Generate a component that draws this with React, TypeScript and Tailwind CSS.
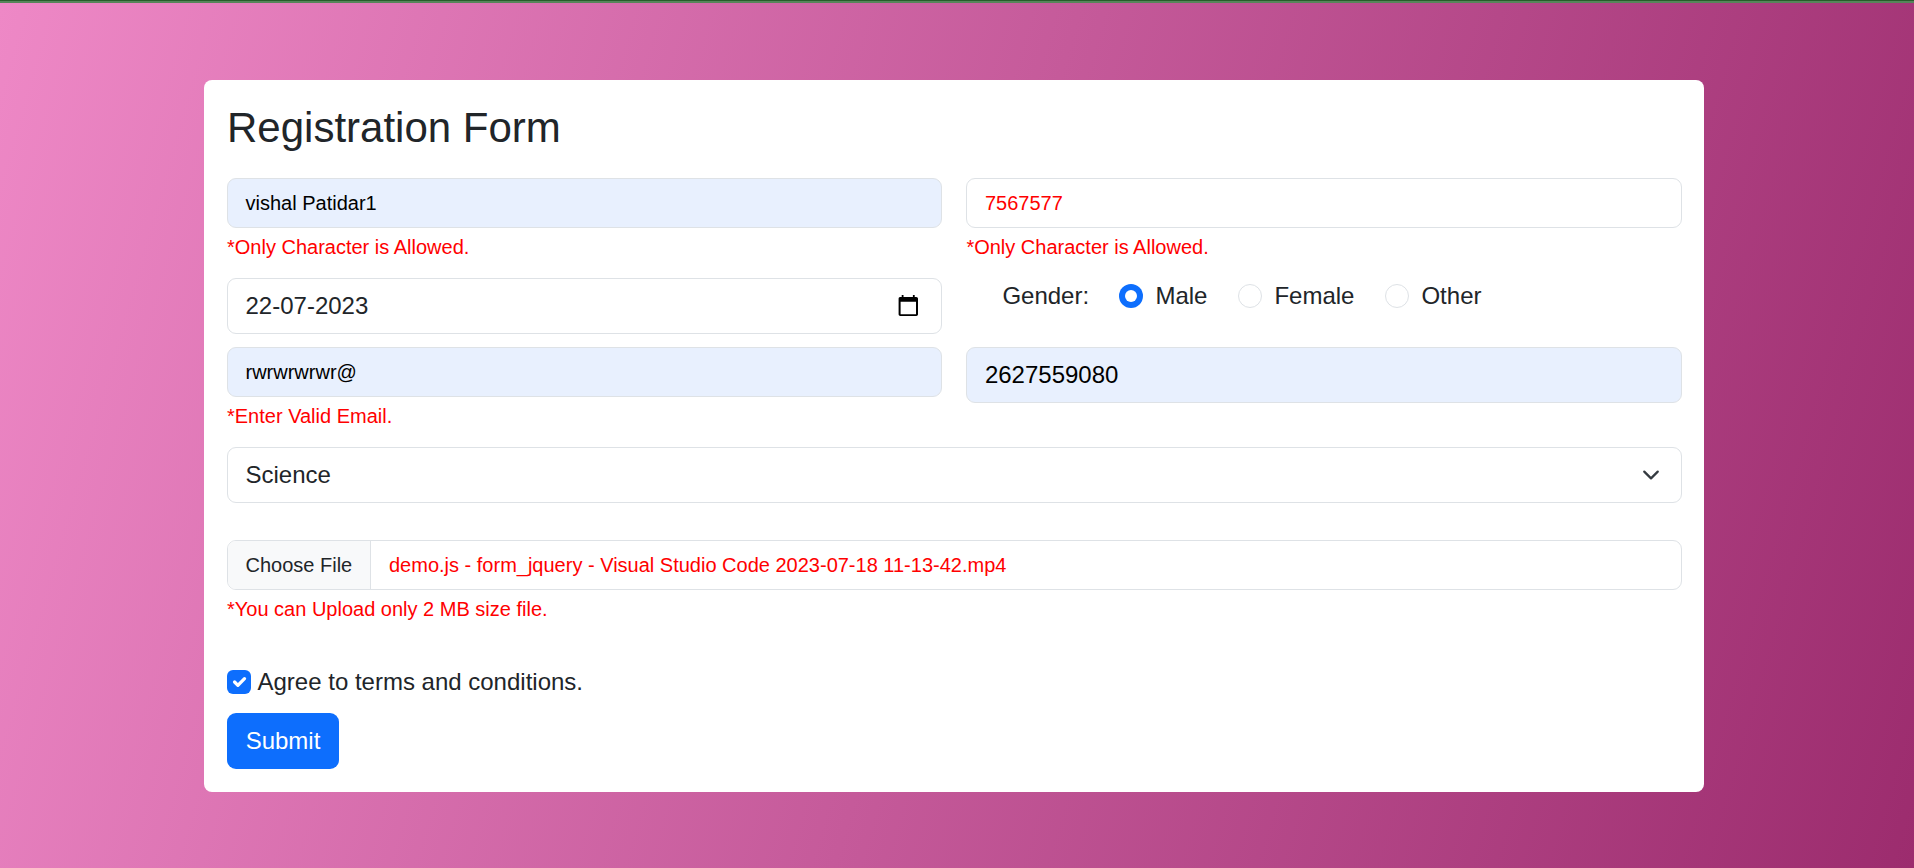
import React from "react";

type FieldProps = {
  children: React.ReactNode;
  small?: boolean;
  tint?: boolean;
  invalid?: boolean;
};

function Field({ children, small, tint, invalid }: FieldProps) {
  return (
    <div
      className={`flex items-center justify-between rounded-[9px] border border-[#dee2e6] px-[17.5px] ${
        small ? "h-[50px] text-[20px] leading-[30px]" : "h-14 text-2xl leading-9"
      } ${tint ? "bg-[#e8f0fe] text-black" : "bg-white"} ${invalid ? "text-[#ff0000]" : ""}`}
    >
      {children}
    </div>
  );
}

function ErrorText({ children }: { children: React.ReactNode }) {
  return <p className="pt-1 text-[20px] leading-[30px] text-[#ff0000]">{children}</p>;
}

function Radio({ label, checked }: { label: string; checked?: boolean }) {
  return (
    <label className="flex h-9 items-center gap-3">
      {checked ? (
        <span className="flex size-6 items-center justify-center rounded-full bg-[#0d6efd]">
          <span className="size-3 rounded-full bg-white" />
        </span>
      ) : (
        <span className="size-6 rounded-full border border-[#dee2e6] bg-white" />
      )}
      <span>{label}</span>
    </label>
  );
}

export default function App() {
  return (
    <div className="flex h-[868px] w-full flex-col font-['Liberation_Sans',Arial,sans-serif] text-2xl leading-9 text-[#212529]">
      <div className="h-[3px] shrink-0 border-t border-[#275c2a] bg-[#56855a]" />
      <main className="flex-1 bg-[linear-gradient(106deg,#ee88c6_0%,#9c2c6e_100%)] pt-[77px] pl-[204px]">
        <form className="flex h-[712px] w-[1500px] flex-col rounded-lg bg-white pt-[23px] pr-[22px] pl-[23px]">
          <h1 className="mb-[25px] h-[50px] text-[42px] leading-[50px]">Registration Form</h1>

          <div className="grid grid-cols-[715px_715.6px] gap-x-[24.4px]">
            <div className="h-[100px]">
              <Field small tint>vishal Patidar1</Field>
              <ErrorText>*Only Character is Allowed.</ErrorText>
            </div>
            <div className="h-[100px]">
              <Field small invalid>7567577</Field>
              <ErrorText>*Only Character is Allowed.</ErrorText>
            </div>

            <div className="h-[69px]">
              <Field>
                <span>22-07-2023</span>
                <svg className="mr-[3.5px] size-6" viewBox="0 0 24 24" fill="#000">
                  <path
                    fillRule="evenodd"
                    d="M4 3h1.7V1h1.8v2h9.4V1h1.8v2H20.300c.95 0 1.7.8 1.7 1.700v15.600c0 .95-.75 1.700-1.700 1.700H4.300c-.95 0-1.700-.75-1.700-1.700V4.700C2.600 3.800 3.200 3 4 3zM4.600 7.700V20.200H20V7.700z"
                  />
                </svg>
              </Field>
            </div>
            <div className="flex h-9 items-center pl-9">
              <span className="w-[117px]">Gender:</span>
              <div className="flex gap-[31px]">
                <Radio label="Male" checked />
                <Radio label="Female" />
                <Radio label="Other" />
              </div>
            </div>

            <div className="h-[100px]">
              <Field small tint>rwrwrwrwr@</Field>
              <ErrorText>*Enter Valid Email.</ErrorText>
            </div>
            <div className="h-[100px]">
              <Field tint>2627559080</Field>
            </div>
          </div>

          <Field>
            <span>Science</span>
            <svg className="mr-[3.5px] size-[18px]" viewBox="0 0 16 16" fill="none">
              <path
                d="m2 5 6 6 6-6"
                stroke="#343a40"
                strokeWidth="2"
                strokeLinecap="round"
                strokeLinejoin="round"
              />
            </svg>
          </Field>

          <div className="mt-[37px] flex h-[50px] overflow-hidden rounded-[9px] border border-[#dee2e6] text-[20px] leading-[48px]">
            <span className="w-[143px] border-r border-[#dee2e6] bg-[#f8f9fa] pl-[17.5px] whitespace-nowrap">
              Choose File
            </span>
            <span className="pl-[18px] text-[#ff0000]">
              demo.js - form_jquery - Visual Studio Code 2023-07-18 11-13-42.mp4
            </span>
          </div>
          <ErrorText>*You can Upload only 2 MB size file.</ErrorText>

          <label className="mt-10 flex h-9 items-center gap-[6.5px]">
            <span className="flex size-6 items-center justify-center rounded-md bg-[#0d6efd]">
              <svg className="size-[22px]" viewBox="0 0 20 20" fill="none">
                <path
                  d="m6 10 3 3 6-6"
                  stroke="#fff"
                  strokeWidth="3"
                  strokeLinecap="round"
                  strokeLinejoin="round"
                />
              </svg>
            </span>
            <span>Agree to terms and conditions.</span>
          </label>

          <button
            type="button"
            className="mt-[13px] h-14 w-28 rounded-[9px] bg-[#0d6efd] text-white"
          >
            Submit
          </button>
        </form>
      </main>
    </div>
  );
}
